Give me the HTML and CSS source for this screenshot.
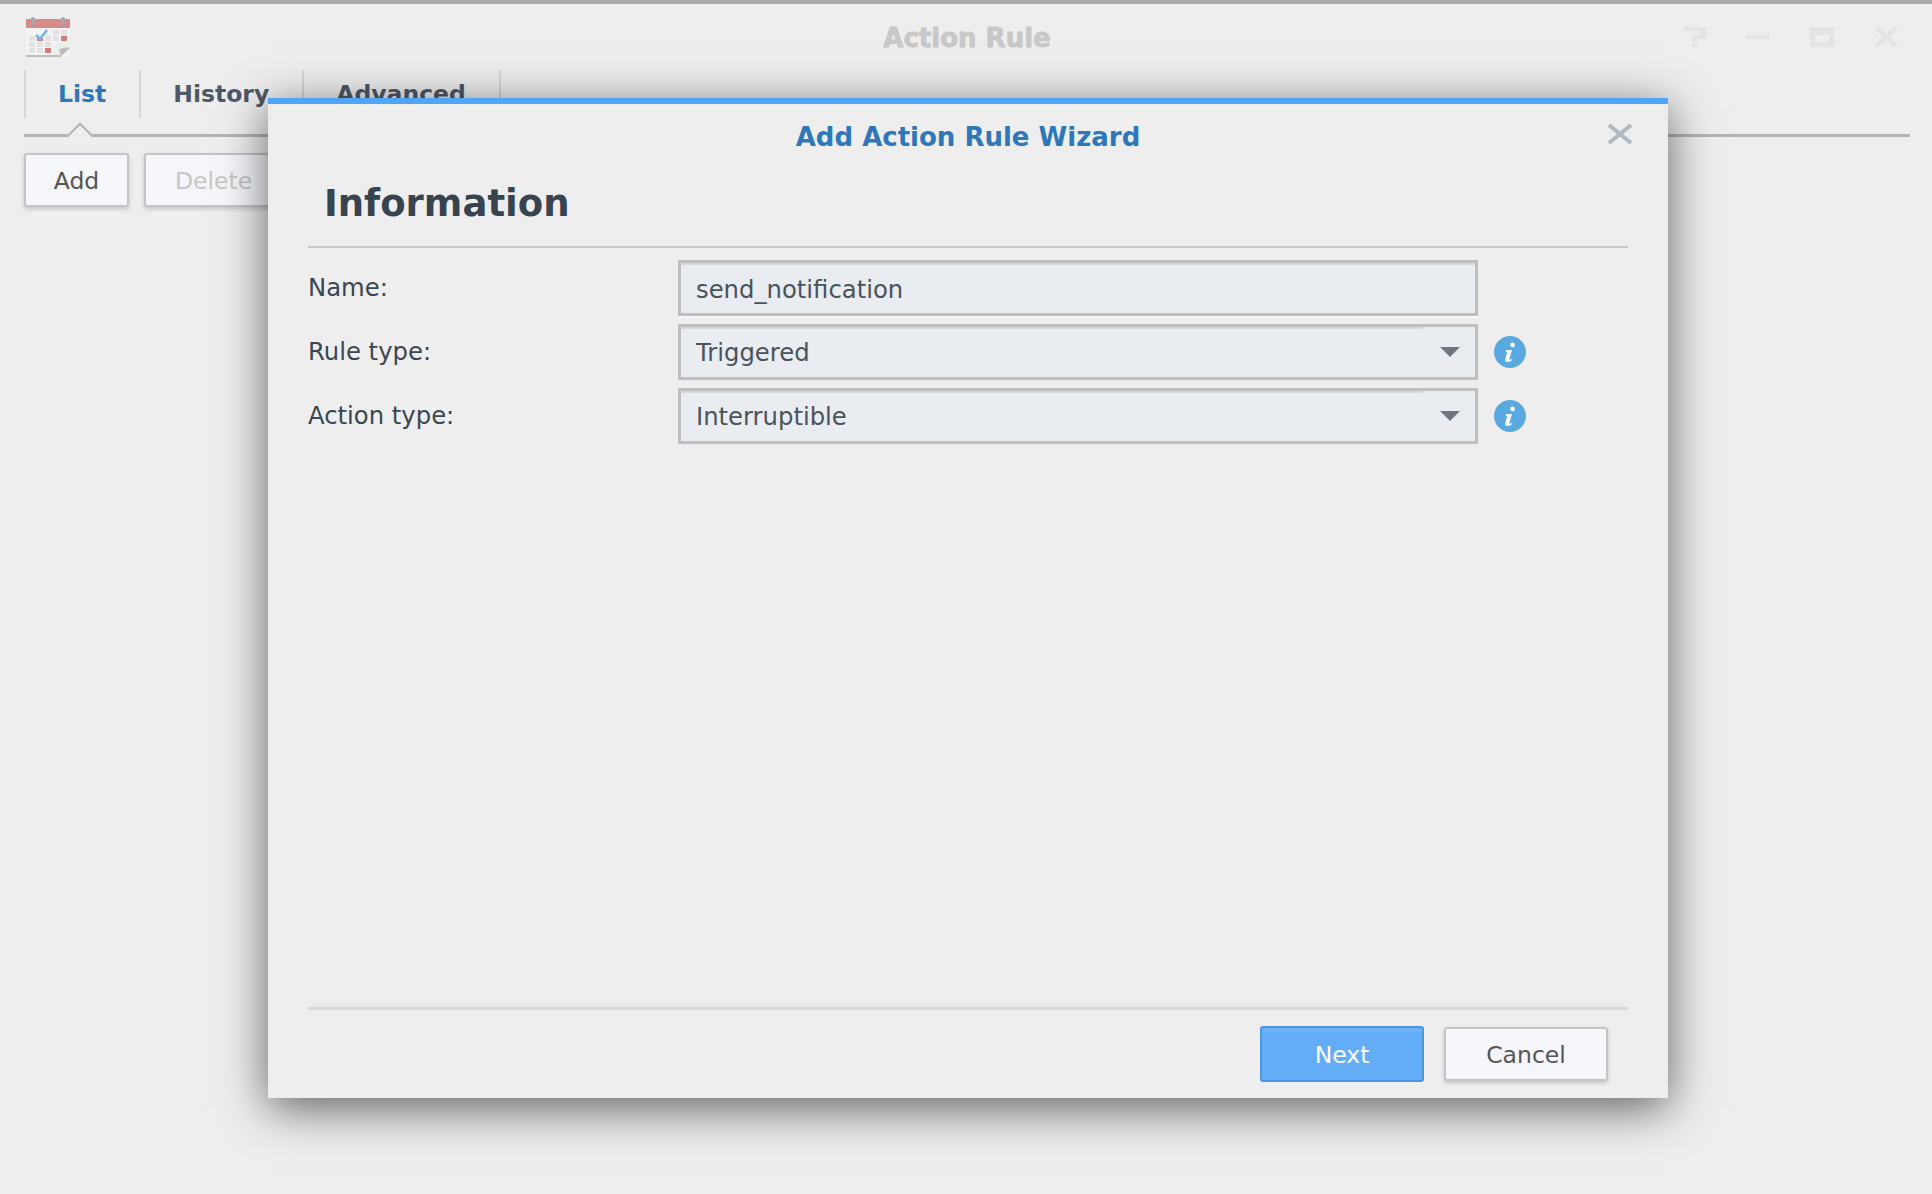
FILE: index.html
```html
<!DOCTYPE html>
<html lang="en">
<head>
    <meta charset="UTF-8">
    <title>Action Rule</title>
    <link rel="stylesheet" href="styles.css">
</head>
<body>

<div class="window">
    <div class="titlebar">
        <svg class="app-icon" width="44" height="40" viewBox="0 0 44 40">
            <rect x="0" y="2" width="44" height="37" fill="#f4f4f4"/>
            <rect x="0" y="2" width="44" height="9" fill="#d78b8b"/>
            <rect x="5" y="0" width="4" height="8" rx="2" fill="#a9a9a9"/>
            <rect x="35" y="0" width="4" height="8" rx="2" fill="#a9a9a9"/>
            <g fill="#e2e2e2">
                <rect x="27" y="13" width="6" height="5"/><rect x="35" y="13" width="6" height="5"/>
                <rect x="3" y="19" width="6" height="5"/><rect x="19" y="19" width="6" height="5"/><rect x="27" y="19" width="6" height="5"/>
                <rect x="3" y="25" width="6" height="5"/><rect x="11" y="25" width="6" height="5"/><rect x="19" y="25" width="6" height="5"/>
                <rect x="3" y="31" width="6" height="5"/><rect x="11" y="31" width="6" height="5"/>
            </g>
            <rect x="35" y="19" width="6" height="5" fill="#d27c7c"/>
            <rect x="19" y="31" width="6" height="5" fill="#d27c7c"/>
            <rect x="11" y="21" width="6" height="3" fill="#d27c7c"/>
            <path d="M10 18l4 4 7-9" fill="none" stroke="#7cb5e6" stroke-width="2.6"/>
            <path d="M27 39l1-12c6 0 12-3 16-5v9l-8 8z" fill="#ededea"/>
            <path d="M35 39l9-8c-4-1-9 0-11 2z" fill="#bcbcb7"/>
            <rect x="0" y="38" width="35" height="2" fill="#bdbdbd"/>
        </svg>
        <div class="window-title">Action Rule</div>
        <div class="window-btns">
            <svg width="22" height="20" viewBox="0 0 22 20"><path d="M0 0h22v12H13v3H8V8h8V4H0z M8 16h5v4H8z" fill="#e4e4e4"/></svg>
            <svg width="24" height="20" viewBox="0 0 24 20"><rect x="0" y="8" width="24" height="4" fill="#e4e4e4"/></svg>
            <svg width="24" height="20" viewBox="0 0 24 20"><path d="M0 0h24v20H0z M5 8v7h14V8z" fill="#e4e4e4" fill-rule="evenodd"/></svg>
            <svg width="24" height="20" viewBox="0 0 24 20"><path d="M2 1l20 18M22 1L2 19" stroke="#e4e4e4" stroke-width="4.5" fill="none"/></svg>
        </div>
    </div>

    <div class="tabs">
        <div class="tab tab-active">List</div>
        <div class="tab">History</div>
        <div class="tab">Advanced</div>
    </div>

    <div class="toolbar">
        <button class="btn" type="button">Add</button>
        <button class="btn btn-disabled" type="button">Delete</button>
    </div>
</div>

<div class="dialog">
    <div class="dialog-title">Add Action Rule Wizard</div>
    <svg class="dialog-close" width="24" height="20" viewBox="0 0 24 20"><path d="M1 1l22 18M23 1L1 19" stroke="#afbac2" stroke-width="4" fill="none"/></svg>

    <div class="dialog-body">
        <h2 class="step-title">Information</h2>

        <div class="form-row">
            <label class="form-label">Name:</label>
            <div class="field field-name">send_notification</div>
        </div>
        <div class="form-row">
            <label class="form-label">Rule type:</label>
            <div class="field field-select">
                Triggered
                <span class="arrow"></span>
            </div>
            <svg class="info" width="32" height="32" viewBox="0 0 32 32">
                <circle cx="16" cy="16" r="16" fill="#59a9e0"/>
                <circle cx="18.5" cy="9" r="2.400" fill="#f4f8fb"/>
                <path d="M12 14h6l-2.600 9c-.2 .8 .4 1 1 .7l1.600-1 .6 1c-1.600 1.300-3 2.300-5 2.300-2 0-3-1.200-2.400-3l2-7.200h-1.500z" fill="#f4f8fb"/>
            </svg>
        </div>
        <div class="form-row">
            <label class="form-label">Action type:</label>
            <div class="field field-select">
                Interruptible
                <span class="arrow"></span>
            </div>
            <svg class="info" width="32" height="32" viewBox="0 0 32 32">
                <circle cx="16" cy="16" r="16" fill="#59a9e0"/>
                <circle cx="18.5" cy="9" r="2.400" fill="#f4f8fb"/>
                <path d="M12 14h6l-2.600 9c-.2 .8 .4 1 1 .7l1.600-1 .6 1c-1.600 1.300-3 2.300-5 2.300-2 0-3-1.200-2.400-3l2-7.200h-1.500z" fill="#f4f8fb"/>
            </svg>
        </div>
    </div>

    <div class="dialog-footer">
        <button class="btn btn-primary" type="button">Next</button>
        <button class="btn btn-cancel" type="button">Cancel</button>
    </div>
</div>

</body>
</html>
```

FILE: styles.css
```css
html, body {
    margin: 0;
    height: 100%;
}
body {
    position: relative;
    height: 1194px;
    overflow: hidden;
    background-color: #eeeeee;
    font-family: "DejaVu Sans", sans-serif;
    color: #3a4651;
}
.window {
    border-top: 4px solid #a9aaac;
    padding: 0 22px 0 24px;
}
.titlebar {
    display: grid;
    grid-template-columns: 1fr auto 1fr;
    align-items: center;
    height: 66px;
}
.app-icon {
    margin-left: 2px;
}
.window-title {
    padding-top: 2px;
    font-size: 26px;
    font-weight: bold;
    color: #c8c8c8;
    -webkit-text-stroke: 0.8px #c8c8c8;
}
.window-btns {
    justify-self: end;
    display: flex;
    gap: 40px;
    margin-right: 12px;
}
.tabs {
    display: flex;
    height: 64px;
    border-bottom: 3px solid #b4b4b4;
    margin-bottom: 16px;
}
.tab {
    height: 48px;
    padding: 0 33px 0 32px;
    display: flex;
    align-items: center;
    font-size: 23.5px;
    font-weight: bold;
    color: #4e5968;
    border-left: 2px solid #d6d6d6;
}
.tab:last-child {
    border-right: 2px solid #d6d6d6;
}
.tab-active {
    color: #2f77bb;
    position: relative;
}
.tab-active::after {
    content: "";
    position: absolute;
    left: 45px;
    top: 56px;
    width: 16px;
    height: 16px;
    background-color: #eeeeee;
    border-top: 2px solid #b4b4b4;
    border-left: 2px solid #b4b4b4;
    transform: rotate(45deg);
}
.toolbar {
    display: flex;
    gap: 15px;
}
.btn {
    font-family: "DejaVu Sans", sans-serif;
    font-size: 23.5px;
    height: 54px;
    padding: 2px 0 0;
    border: 2px solid #c4c4c4;
    border-radius: 3px;
    background-color: #f4f6fa;
    color: #555555;
    box-shadow: 0 2px 4px rgba(0,0,0,0.18);
}
.toolbar .btn {
    width: 105px;
}
.toolbar .btn-disabled {
    width: 139px;
    color: #c6c6c6;
}
.dialog {
    position: absolute;
    left: 268px;
    top: 98px;
    width: 1400px;
    height: 1000px;
    box-sizing: border-box;
    border-top: 6px solid #4fa5f8;
    background-color: #eeeeee;
    box-shadow: 0 10px 44px rgba(0,0,0,0.6);
    display: flex;
    flex-direction: column;
    padding: 0 40px;
}
.dialog-title {
    text-align: center;
    font-size: 26px;
    font-weight: bold;
    color: #2f77bb;
    padding-top: 18px;
    height: 37px;
}
.dialog-close {
    position: absolute;
    right: 36px;
    top: 20px;
}
.dialog-body {
    flex: 1;
}
.step-title {
    margin: 0 0 12px;
    padding: 22px 16px 19px;
    font-size: 37px;
    line-height: 46px;
    font-weight: bold;
    color: #37434e;
    border-bottom: 2px solid #c8c8c8;
}
.form-row {
    display: flex;
    align-items: center;
    height: 56px;
    margin-bottom: 8px;
}
.form-label {
    width: 370px;
    font-size: 24.3px;
    position: relative;
    top: -1px;
}
.field {
    width: 800px;
    height: 56px;
    box-sizing: border-box;
    border: 3px solid #bfbfbf;
    background-color: #e9ecf1;
    padding: 0 15px;
    display: flex;
    align-items: center;
    justify-content: space-between;
    font-size: 24.3px;
    color: #4a535c;
}
.field-name {
    padding-top: 2px;
    box-shadow: 0 2px 0 #f8f8f8, inset 0 2px 0 #d5d8dc;
}
.field-select {
    background: linear-gradient(#d5d8dc, #d5d8dc) no-repeat top left / calc(100% - 52px) 2px, #e9ecf1;
}
.arrow {
    width: 0;
    height: 0;
    border-left: 10px solid transparent;
    border-right: 10px solid transparent;
    border-top: 10px solid #6d7781;
}
.info {
    margin-left: 16px;
}
.dialog-footer {
    display: flex;
    justify-content: flex-end;
    align-items: flex-start;
    gap: 20px;
    height: 91px;
    padding-top: 16px;
    padding-right: 20px;
    border-top: 3px solid #d8d8d8;
    box-shadow: 0 -4px 4px -2px rgba(0,0,0,0.04);
    box-sizing: border-box;
}
.dialog-footer .btn {
    width: 164px;
    height: 56px;
}
.dialog-footer .btn-primary {
    background-color: #62adf6;
    border-color: #4c97e3;
    color: #ffffff;
    box-shadow: inset 0 4px 0 rgba(255,255,255,0.06);
}
.dialog-footer .btn-cancel {
    height: 54px;
    margin-top: 1px;
    box-shadow: 0 2px 4px rgba(0,0,0,0.18);
}
```
